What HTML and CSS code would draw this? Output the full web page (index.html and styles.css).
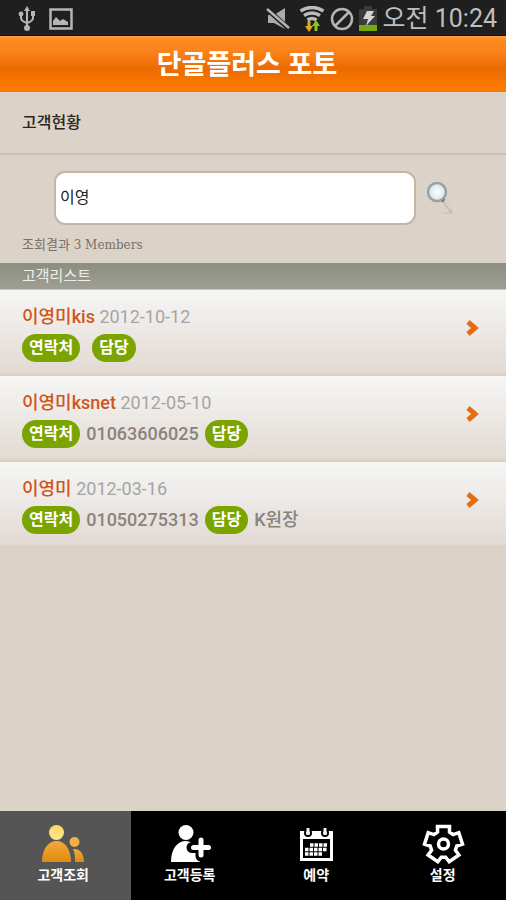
FILE: index.html
```html
<!DOCTYPE html>
<html lang="ko">
<head>
<meta charset="utf-8">
<meta name="viewport" content="width=device-width, initial-scale=1">
<title>단골플러스 포토</title>
<link rel="stylesheet" href="styles.css">
</head>
<body>
<div class="app">
  <div class="status">
    <div class="status-icons">
      <svg width="18" height="26" viewBox="0 0 18 26" fill="none" stroke="#b5b5b5" stroke-width="2"><path d="M9 4v17M3 8v4q0 3 6 5M15 8v4q0 3-6 5"/><g fill="#b5b5b5" stroke="none"><path d="M9 0l3 5H6z"/><circle cx="9" cy="22" r="3"/><circle cx="3" cy="8" r="2.4"/><path d="M13 5h4v5h-4z"/></g></svg>
      <svg width="24" height="22" viewBox="0 0 24 22"><path d="M1.5 1.5h21v19h-21z" fill="none" stroke="#b5b5b5" stroke-width="2.5"/><path d="M4 17v-4l3-4 4 4 3-2 5 3v3z" fill="#b5b5b5"/></svg>
    </div>
    <div class="status-icons right">
      <svg width="24" height="22" viewBox="0 0 24 22"><path d="M2 7h6l11-7v21L8 15H2z" fill="#aaa"/><path d="M1 1l21 19" stroke="#1f1f1f" stroke-width="5"/><path d="M1 1l22 19" stroke="#b5b5b5" stroke-width="2.5"/></svg>
      <svg class="wifi" width="26" height="26" viewBox="0 0 26 26" fill="none"><g stroke="#bbb" stroke-width="3.5"><path d="M1.5 5q11.500-7 23 0M5 9.500q8-5 16 0M8.500 14q4.500-3 9 0"/></g><path d="M10 15v6" stroke="#e0a81c" stroke-width="3"/><path d="M6 20h8l-4 6z" fill="#e0a81c"/><path d="M17 25v-6" stroke="#8cc51b" stroke-width="3"/><path d="M13 20h8l-4-6z" fill="#8cc51b"/></svg>
      <svg width="24" height="24" viewBox="0 0 24 24" fill="none" stroke="#b5b5b5" stroke-width="2.5"><circle cx="12" cy="12" r="10"/><path d="M5 19L19 5"/></svg>
      <svg width="18" height="26" viewBox="0 0 18 26"><path d="M0 3h5V0h8v3h5v16H0z" fill="#3b3b3b"/><path d="M0 19h18v6H0z" fill="#76a90c"/><path d="M8 5h7l-3 5h4L7 20l2-7H4z" fill="#d5d5d5"/></svg>
      <span class="clock">오전 10:24</span>
    </div>
  </div>
  <header class="header"><h1>단골플러스 포토</h1></header>
  <main>
    <h2 class="title">고객현황</h2>
    <form class="search">
      <div class="search-row">
        <input type="text" value="이영" aria-label="고객 검색">
        <button type="button" aria-label="검색">
          <svg width="30" height="34" viewBox="0 0 30 34"><defs><radialGradient id="lens"><stop offset="0" stop-color="#fff"/><stop offset="1" stop-color="#cfe3e7"/></radialGradient></defs><path d="M14 33l9-3 6 3z" fill="#cfc6bd"/><path d="M16 18l9 12" stroke="#c3bcb7" stroke-width="3" stroke-linecap="round"/><path d="M17 18l8 11" stroke="#e5e0dd" stroke-width="1"/><path d="M15 17l3 3" stroke="#6c6f70" stroke-width="4"/><circle cx="11" cy="11" r="9" fill="url(#lens)" stroke="#9a9fa2" stroke-width="2.5"/></svg>
        </button>
      </div>
      <p class="result"><span>조회결과</span> 3 Members</p>
    </form>
    <h3 class="list-title">고객리스트</h3>
    <ul class="list">
      <li><a href="#"><div><p><b>이영미kis</b> <time>2012-10-12</time></p><p class="info"><span class="tag">연락처</span><span></span><span class="tag">담당</span></p></div><svg width="14" height="18" viewBox="0 0 14 18"><path d="M3 3l7 6-7 6" /></svg></a></li>
      <li><a href="#"><div><p><b>이영미ksnet</b> <time>2012-05-10</time></p><p class="info"><span class="tag">연락처</span><span>01063606025</span><span class="tag">담당</span></p></div><svg width="14" height="18" viewBox="0 0 14 18"><path d="M3 3l7 6-7 6" /></svg></a></li>
      <li><a href="#"><div><p><b>이영미</b> <time>2012-03-16</time></p><p class="info"><span class="tag">연락처</span><span>01050275313</span><span class="tag">담당</span><span>K원장</span></p></div><svg width="14" height="18" viewBox="0 0 14 18"><path d="M3 3l7 6-7 6" /></svg></a></li>
    </ul>
  </main>
  <nav class="tabs">
    <a class="active" href="#"><svg width="44" height="40" viewBox="0 0 44 40"><defs><linearGradient id="head" x2="0" y2="1"><stop stop-color="#ffd766"/><stop offset="1" stop-color="#ffe48e"/></linearGradient><linearGradient id="torso" x2="0" y2="1"><stop stop-color="#f0aa3c"/><stop offset="1" stop-color="#e18a10"/></linearGradient></defs><circle cx="15.500" cy="8.500" r="7.500" fill="url(#head)"/><path d="M1 38C1 25 7 17 15.500 17S30 25 30 38z" fill="url(#torso)"/><circle cx="33.500" cy="18" r="5" fill="#f0b04a"/><path d="M32 25c7-1 11 5 11 13h-9c0-5 0-9-2-13z" fill="url(#torso)"/></svg><span>고객조회</span></a>
    <a href="#"><svg width="44" height="40" viewBox="0 0 44 40" fill="#fff"><circle cx="18" cy="8.500" r="7.500"/><path d="M3 38C3 25 9 17 18 17c8 0 14 10 14 21z"/><path d="M24 23.500h18M33 15v17" stroke="#000" stroke-width="11" stroke-linecap="round"/><path d="M25.500 23.500h15M33 16v15" stroke="#fff" stroke-width="5" stroke-linecap="round"/></svg><span>고객등록</span></a>
    <a href="#"><svg width="44" height="40" viewBox="0 0 44 40"><path d="M6 7h33v30H6z" fill="#fff"/><path d="M9 15h27v19H9z" fill="#000"/><g fill="none" stroke="#000" stroke-width="2"><circle cx="14" cy="9" r="3"/><circle cx="31" cy="9" r="3"/></g><path d="M14 4v7M31 4v7" stroke="#eee" stroke-width="3"/><g stroke="#fff" stroke-width="3.5" stroke-dasharray="3.5 1"><path d="M16 21h18M11 25.500h22.500M11 30h18"/></g></svg><span>예약</span></a>
    <a href="#"><svg width="44" height="40" viewBox="0 0 44 40" fill="none" stroke="#fff" stroke-width="3.5"><g transform="translate(22.500 20)"><path d="M-6-12V-17.500H6V-12L9.600-9.400 15.300-11.300 19 .1 13.300 2 11.900 6.200 15.400 11 5.700 17.700 2.200 13.200H-2.200L-5.700 17.700-15.400 11-11.900 6.200-13.300 2-19 .1-15.300-11.300-9.600-9.400z"/><circle r="5"/></g></svg><span>설정</span></a>
  </nav>
</div>
</body>
</html>
```
FILE: styles.css
```css
* { box-sizing: border-box; }
body, h1, h2, h3, p, ul { margin: 0; padding: 0; }
body { font-family: Roboto, "Noto Sans CJK KR", sans-serif; background: #dcd3c8; }
a { color: inherit; text-decoration: none; }
svg { display: block; flex: none; }
.app { min-height: 100vh; display: flex; flex-direction: column; }
main { flex: 1; }
.status { height: 36px; padding: 2px 9px 0 18px; background: #1f1f1f; border-bottom: 1px solid #111; display: flex; align-items: center; justify-content: space-between; }
.status-icons { display: flex; align-items: center; gap: 13px; }
.right { gap: 5px; }
.wifi { margin-left: 4px; }
.clock { margin-left: 1px; font-size: 25px; line-height: 34px; color: #bebebe; white-space: nowrap; }
.header { height: 56px; padding: 2px 12px 0 0; background: linear-gradient(#ffa04a 0, #ff8a20 3px, #fb831b 15px, #ea6b00 33px, #ff7a00 52px, #f57a08); text-align: center; }
.header h1 { font-size: 27px; line-height: 54px; font-weight: 700; color: #fff; }
.title { height: 63px; padding-left: 22px; font-size: 16px; line-height: 62px; font-weight: 500; color: #2b2420; border-bottom: 2px solid #cbbfb4; }
.search { padding: 16px 22px 8px; }
.search-row { display: flex; align-items: center; gap: 10px; padding: 0 28px 0 32px; }
.search input { flex: 1; min-width: 0; height: 54px; padding: 0 4px 4px; border: 2px solid #c3b5a7; border-radius: 11px; background: #fff; font: 16px/20px Roboto, "Noto Sans CJK KR", sans-serif; color: #222; }
.search button { width: 30px; height: 34px; padding: 0; border: 0; background: none; }
.result { margin-top: 10px; font: 12px/20px "DejaVu Serif", "Noto Sans CJK KR", serif; color: #77706a; }
.result span { font-size: 13px; }
.list-title { height: 27px; padding-left: 22px; font-size: 15px; line-height: 26px; font-weight: 400; color: #eeeee9; background: linear-gradient(#8c8e80, #9f9e95); border-bottom: 1px solid #c5c4bd; }
.list { list-style: none; }
.list a { height: 86px; padding: 13px 27px 0 22px; display: flex; justify-content: space-between; background: linear-gradient(#f6f6f5, #e2dad4 82px, #dfcfbf); border-bottom: 2px solid #dfd0c0; font-size: 18px; line-height: 28px; color: #89837c; }
.list a > svg { margin-top: 16px; fill: none; stroke: #e56c12; stroke-width: 5; }
.list b { font-weight: 500; color: #cf5519; }
.list time { color: #a5a5a5; }
.info { margin-top: 3px; display: flex; gap: 6px; font-weight: 500; }
.tag { height: 28px; padding: 0 7px; border-radius: 14px; background: #7ca400; color: #fff; font-size: 16px; font-weight: 700; }
.tabs { height: 89px; display: grid; grid-template-columns: repeat(4, 1fr); background: #000; color: #fff; }
.tabs a { display: flex; flex-direction: column; align-items: center; padding-top: 13px; font-size: 14px; line-height: 22px; font-weight: 700; }
.tabs .active { background: #555; box-shadow: 4px 0 #555; }
```
